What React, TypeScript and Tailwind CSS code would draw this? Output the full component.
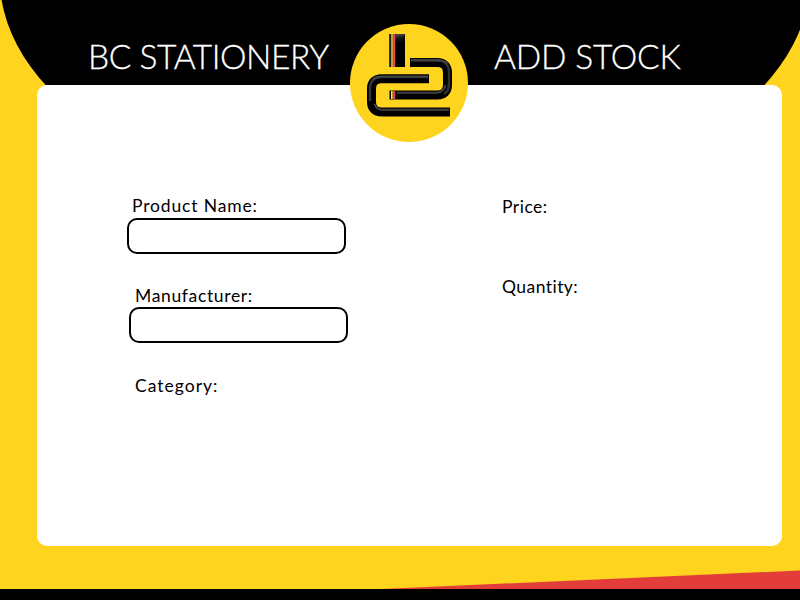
import React from "react";

const UPPER = "M410 62.5H437Q447.5 62.5 447.5 73V84.500Q447.500 95 437 95H389.500";
const LOWER = "M429 78.800H382Q371.500 78.800 371.500 89V101.500Q371.500 112 382 112H450";

function Backdrop() {
  return (
    <svg className="absolute inset-0" width="800" height="600" viewBox="0 0 800 600">
      <ellipse cx="405" cy="-23" rx="405.400" ry="234" fill="#000" />
      <path d="M370 589.500L800 570.500V590H370Z" fill="#e33d39" />
      <rect y="589" width="800" height="11" fill="#000" />
    </svg>
  );
}

function Logo() {
  return (
    <svg className="absolute left-[350px] top-[24px]" width="118" height="118" viewBox="350 24 118 118">
      <defs>
        <linearGradient id="stem" x1="0.3" y1="0" x2="0.5" y2="1">
          <stop offset="0" stopColor="#4a4a4a" />
          <stop offset="0.5" stopColor="#141414" />
          <stop offset="1" stopColor="#000" />
        </linearGradient>
        <filter id="bevel" x="-10%" y="-10%" width="120%" height="120%">
          <feGaussianBlur stdDeviation="0.7" />
        </filter>
      </defs>
      <circle cx="409" cy="83" r="59" fill="#ffd41f" />
      <rect x="389.300" y="34" width="15.700" height="33" fill="#000" />
      <rect x="395.500" y="34" width="9" height="9" fill="url(#stem)" />
      <rect x="389.300" y="34" width="1.200" height="33" fill="#3a3528" />
      <rect x="391.300" y="34" width="1" height="33" fill="#eee0a0" />
      <rect x="392.300" y="34" width="1.200" height="33" fill="#f4c832" />
      <rect x="393.500" y="34" width="1.800" height="33" fill="#ec4650" />
      <g fill="none" strokeWidth="9">
        <path d={UPPER} stroke="#000" />
        <path d={LOWER} stroke="#000" />
      </g>
      <g fill="none" filter="url(#bevel)">
        <path d="M411 60.500H437Q449 60.500 449 73V84Q449 91 444 94" stroke="#303030" strokeWidth="2.500" />
        <path d="M411 60H437Q444 60 447.500 63.500" stroke="#484848" strokeWidth="1.500" />
        <path d="M397 92.800H437Q444 92.300 445.500 85" stroke="#404040" strokeWidth="2" />
        <path d="M428 77H382Q370 77 370 89V101" stroke="#353535" strokeWidth="2.500" />
        <path d="M428 76.500H382Q376 76.500 372.500 79.500" stroke="#4a4a4a" strokeWidth="1.500" />
        <path d="M374.500 104Q376.500 109.800 382 109.800H449" stroke="#404040" strokeWidth="2" />
      </g>
      <rect x="391" y="91" width="1.300" height="8" fill="#eee0a0" />
      <rect x="392.300" y="91" width="1.200" height="8" fill="#e8be32" />
      <rect x="393.500" y="91" width="1.800" height="8" fill="#e4444c" />
    </svg>
  );
}

function Label({ text, className }: { text: string; className: string }) {
  return (
    <div className={`h-6 whitespace-nowrap text-[17.5px] leading-6 ${className}`}>{text}</div>
  );
}

export default function App() {
  return (
    <div className="relative h-[600px] w-[800px] overflow-hidden bg-[#ffd41f] font-['Lato',sans-serif] text-black">
      <Backdrop />
      <header className="relative flex h-[85px] pl-[88px] pt-9 text-[33.5px] font-light leading-10 text-white [-webkit-text-stroke:0.3px_white]">
        <h1 className="w-[406px] whitespace-nowrap tracking-[-0.45px]">BC STATIONERY</h1>
        <h2 className="whitespace-nowrap tracking-[-0.2px]">ADD STOCK</h2>
      </header>
      <main className="relative ml-[37px] flex h-[461px] w-[745px] rounded-[10px] bg-white pl-[90px] pt-[109px]">
        <div className="w-[375px]">
          <Label text="Product Name:" className="pl-[5px] tracking-[0.85px]" />
          <input aria-label="Product Name" className="block h-9 w-[219px] rounded-[10px] border-2 border-black bg-white px-2 outline-none" />
          <Label text="Manufacturer:" className="mt-[30px] pl-2 tracking-[0.65px]" />
          <input aria-label="Manufacturer" className="-mt-px ml-0.5 block h-9 w-[219px] rounded-[10px] border-2 border-black bg-white px-2 outline-none" />
          <Label text="Category:" className="mt-[31px] pl-2 tracking-[1px]" />
        </div>
        <div className="pt-px">
          <Label text="Price:" className="tracking-[0.5px]" />
          <Label text="Quantity:" className="mt-14 tracking-[0.45px]" />
        </div>
      </main>
      <Logo />
    </div>
  );
}
